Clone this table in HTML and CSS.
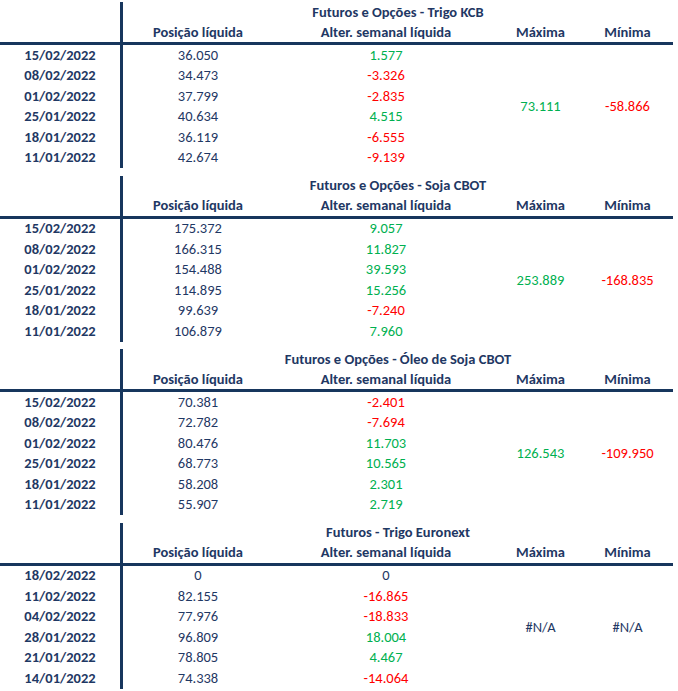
FILE: index.html
```html
<!DOCTYPE html>
<html lang="pt">
<head>
<meta charset="utf-8">
<title>Futuros e Opções</title>
<link rel="stylesheet" href="styles.css">
</head>
<body>
<div class="sheet">

<section class="block">
  <div class="vline"></div><div class="hline"></div>
  <div class="c"></div><div class="c title">Futuros e Opções - Trigo KCB</div>
  <div class="c"></div><div class="c h">Posição líquida</div><div class="c h">Alter. semanal líquida</div><div class="c h">Máxima</div><div class="c h">Mínima</div>
  <div class="c mx pos">73.111</div><div class="c mn neg">-58.866</div>
  <div class="c d">15/02/2022</div><div class="c">36.050</div><div class="c pos">1.577</div>
  <div class="c d">08/02/2022</div><div class="c">34.473</div><div class="c neg">-3.326</div>
  <div class="c d">01/02/2022</div><div class="c">37.799</div><div class="c neg">-2.835</div>
  <div class="c d">25/01/2022</div><div class="c">40.634</div><div class="c pos">4.515</div>
  <div class="c d">18/01/2022</div><div class="c">36.119</div><div class="c neg">-6.555</div>
  <div class="c d">11/01/2022</div><div class="c">42.674</div><div class="c neg">-9.139</div>
</section>

<section class="block">
  <div class="vline"></div><div class="hline"></div>
  <div class="c"></div><div class="c title">Futuros e Opções - Soja CBOT</div>
  <div class="c"></div><div class="c h">Posição líquida</div><div class="c h">Alter. semanal líquida</div><div class="c h">Máxima</div><div class="c h">Mínima</div>
  <div class="c mx pos">253.889</div><div class="c mn neg">-168.835</div>
  <div class="c d">15/02/2022</div><div class="c">175.372</div><div class="c pos">9.057</div>
  <div class="c d">08/02/2022</div><div class="c">166.315</div><div class="c pos">11.827</div>
  <div class="c d">01/02/2022</div><div class="c">154.488</div><div class="c pos">39.593</div>
  <div class="c d">25/01/2022</div><div class="c">114.895</div><div class="c pos">15.256</div>
  <div class="c d">18/01/2022</div><div class="c">99.639</div><div class="c neg">-7.240</div>
  <div class="c d">11/01/2022</div><div class="c">106.879</div><div class="c pos">7.960</div>
</section>

<section class="block">
  <div class="vline"></div><div class="hline"></div>
  <div class="c"></div><div class="c title">Futuros e Opções - Óleo de Soja CBOT</div>
  <div class="c"></div><div class="c h">Posição líquida</div><div class="c h">Alter. semanal líquida</div><div class="c h">Máxima</div><div class="c h">Mínima</div>
  <div class="c mx pos">126.543</div><div class="c mn neg">-109.950</div>
  <div class="c d">15/02/2022</div><div class="c">70.381</div><div class="c neg">-2.401</div>
  <div class="c d">08/02/2022</div><div class="c">72.782</div><div class="c neg">-7.694</div>
  <div class="c d">01/02/2022</div><div class="c">80.476</div><div class="c pos">11.703</div>
  <div class="c d">25/01/2022</div><div class="c">68.773</div><div class="c pos">10.565</div>
  <div class="c d">18/01/2022</div><div class="c">58.208</div><div class="c pos">2.301</div>
  <div class="c d">11/01/2022</div><div class="c">55.907</div><div class="c pos">2.719</div>
</section>

<section class="block">
  <div class="vline"></div><div class="hline"></div>
  <div class="c"></div><div class="c title">Futuros - Trigo Euronext</div>
  <div class="c"></div><div class="c h">Posição líquida</div><div class="c h">Alter. semanal líquida</div><div class="c h">Máxima</div><div class="c h">Mínima</div>
  <div class="c mx">#N/A</div><div class="c mn">#N/A</div>
  <div class="c d">18/02/2022</div><div class="c">0</div><div class="c">0</div>
  <div class="c d">11/02/2022</div><div class="c">82.155</div><div class="c neg">-16.865</div>
  <div class="c d">04/02/2022</div><div class="c">77.976</div><div class="c neg">-18.833</div>
  <div class="c d">28/01/2022</div><div class="c">96.809</div><div class="c pos">18.004</div>
  <div class="c d">21/01/2022</div><div class="c">78.805</div><div class="c pos">4.467</div>
  <div class="c d">14/01/2022</div><div class="c">74.338</div><div class="c neg">-14.064</div>
</section>

</div>
</body>
</html>
```

FILE: styles.css
```css
html, body {
  margin: 0;
  padding: 0;
  background: #ffffff;
}
.sheet {
  padding-top: 2px;
  display: flex;
  flex-direction: column;
  gap: 7.5px;
  font-family: Carlito, Calibri, Lato, "Liberation Sans", sans-serif;
  font-size: 14.5px;
  color: #1f3864;
}
.block {
  display: grid;
  grid-template-columns: 120px 3px 150px 226px 83px 91px;
  grid-template-rows: 20px 20px 3px repeat(6, 20.5px);
  width: 673px;
}
.vline {
  grid-column: 2;
  grid-row: 1 / -1;
  background: #17365d;
}
.hline {
  grid-column: 1 / -1;
  grid-row: 3;
  background: #17365d;
}
.c {
  display: flex;
  align-items: center;
  justify-content: center;
  white-space: nowrap;
  padding-bottom: 1px;
}
.title {
  grid-column: 3 / span 4;
  font-weight: 700;
}
.h {
  font-weight: 700;
}
.d {
  grid-column: 1;
  font-weight: 700;
}
.d + .c { grid-column: 3; }
.d + .c + .c { grid-column: 4; }
.mx {
  grid-column: 5;
  grid-row: 4 / span 6;
}
.mn {
  grid-column: 6;
  grid-row: 4 / span 6;
}
.pos { color: #00b050; }
.neg { color: #ff0000; }
```
